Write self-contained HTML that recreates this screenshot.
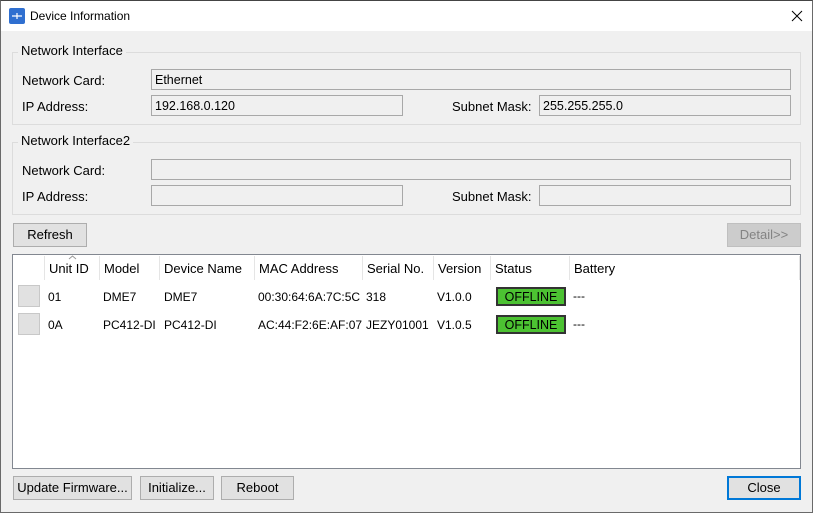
<!DOCTYPE html>
<html><head><style>
*{box-sizing:border-box;margin:0;padding:0}
body{width:813px;height:513px;background:#f0f0f0;font-family:"Liberation Sans",sans-serif;font-size:12px;color:#000;position:relative;overflow:hidden}
.a{position:absolute;white-space:nowrap}
.l{font-size:13px}
.win{position:absolute;left:0;top:0;width:813px;height:513px;border:1px solid #6a6a6a;border-top-color:#444}
.title{position:absolute;left:1px;top:1px;width:811px;height:30px;background:#fff}
.grp{position:absolute;border:1px solid #dcdcdc}
.glbl{position:absolute;background:#f0f0f0;padding:0 3px;font-size:13px}
.fld{position:absolute;border:1px solid #a8a8a8;background:#f0f0f0;height:21px;padding:3px 3px;font-size:12.5px}
.btn{position:absolute;border:1px solid #adadad;background:#e1e1e1;text-align:center;line-height:22px;height:24px;font-size:13px}
.ck{position:absolute;width:22px;height:22px;background:#e1e1e1;border:1px solid #c8c8c8}
.off{position:absolute;width:70px;height:19px;background:#4cc232;border:2px solid #333;text-align:center;line-height:17px;font-size:12.5px}
.sep{position:absolute;top:256px;width:1px;height:24px;background:#e5e5e5}
</style></head><body>
<div class="win"></div>
<div class="title"></div>
<svg class="a" style="left:9px;top:8px" width="16" height="16"><rect width="16" height="16" rx="2" fill="#2f6fd0"/><path d="M3 8h10M8 5v6" stroke="#fff" stroke-width="1.2"/></svg>
<div class="a" style="left:30px;top:9px">Device Information</div>
<svg class="a" style="left:791px;top:10px" width="12" height="12"><path d="M1 1L11 11M11 1L1 11" stroke="#000" stroke-width="1"/></svg>

<div class="grp" style="left:12px;top:52px;width:789px;height:73px"></div>
<div class="glbl" style="left:18px;top:43px">Network Interface</div>
<div class="a l" style="left:22px;top:73px">Network Card:</div>
<div class="fld" style="left:151px;top:69px;width:640px">Ethernet</div>
<div class="a l" style="left:22px;top:99px">IP Address:</div>
<div class="fld" style="left:151px;top:95px;width:252px">192.168.0.120</div>
<div class="a l" style="left:452px;top:99px">Subnet Mask:</div>
<div class="fld" style="left:539px;top:95px;width:252px">255.255.255.0</div>

<div class="grp" style="left:12px;top:142px;width:789px;height:73px"></div>
<div class="glbl" style="left:18px;top:133px">Network Interface2</div>
<div class="a l" style="left:22px;top:163px">Network Card:</div>
<div class="fld" style="left:151px;top:159px;width:640px"></div>
<div class="a l" style="left:22px;top:189px">IP Address:</div>
<div class="fld" style="left:151px;top:185px;width:252px"></div>
<div class="a l" style="left:452px;top:189px">Subnet Mask:</div>
<div class="fld" style="left:539px;top:185px;width:252px"></div>

<div class="btn" style="left:13px;top:223px;width:74px">Refresh</div>
<div class="btn" style="left:727px;top:223px;width:74px;background:#ccc;border-color:#bfbfbf;color:#838383">Detail&gt;&gt;</div>

<div class="a" style="left:12px;top:254px;width:789px;height:215px;background:#fff;border:1px solid #828790"></div>
<div class="sep" style="left:44px"></div><div class="sep" style="left:99px"></div><div class="sep" style="left:159px"></div><div class="sep" style="left:254px"></div><div class="sep" style="left:362px"></div><div class="sep" style="left:433px"></div><div class="sep" style="left:490px"></div><div class="sep" style="left:569px"></div><div class="sep" style="left:799px"></div>
<svg class="a" style="left:68px;top:255px" width="9" height="5"><path d="M1 4L4.5 1L8 4" stroke="#999" fill="none"/></svg>
<div class="a l" style="left:49px;top:261px">Unit ID</div>
<div class="a l" style="left:104px;top:261px">Model</div>
<div class="a l" style="left:164px;top:261px">Device Name</div>
<div class="a l" style="left:259px;top:261px">MAC Address</div>
<div class="a l" style="left:367px;top:261px">Serial No.</div>
<div class="a l" style="left:438px;top:261px">Version</div>
<div class="a l" style="left:495px;top:261px">Status</div>
<div class="a l" style="left:574px;top:261px">Battery</div>

<div class="ck" style="left:18px;top:285px"></div>
<div class="a" style="left:48px;top:290px">01</div>
<div class="a" style="left:103px;top:290px">DME7</div>
<div class="a" style="left:164px;top:290px">DME7</div>
<div class="a" style="left:258px;top:290px">00:30:64:6A:7C:5C</div>
<div class="a" style="left:366px;top:290px">318</div>
<div class="a" style="left:437px;top:290px">V1.0.0</div>
<div class="off" style="left:496px;top:287px">OFFLINE</div>
<div class="a" style="left:573px;top:289px">---</div>

<div class="ck" style="left:18px;top:313px"></div>
<div class="a" style="left:48px;top:318px">0A</div>
<div class="a" style="left:103px;top:318px">PC412-DI</div>
<div class="a" style="left:164px;top:318px">PC412-DI</div>
<div class="a" style="left:258px;top:318px">AC:44:F2:6E:AF:07</div>
<div class="a" style="left:366px;top:318px">JEZY01001</div>
<div class="a" style="left:437px;top:318px">V1.0.5</div>
<div class="off" style="left:496px;top:315px">OFFLINE</div>
<div class="a" style="left:573px;top:317px">---</div>

<div class="btn" style="left:13px;top:476px;width:119px">Update Firmware...</div>
<div class="btn" style="left:140px;top:476px;width:74px">Initialize...</div>
<div class="btn" style="left:221px;top:476px;width:73px">Reboot</div>
<div class="btn" style="left:727px;top:476px;width:74px;border:2px solid #0078d7;line-height:20px">Close</div>
</body></html>
